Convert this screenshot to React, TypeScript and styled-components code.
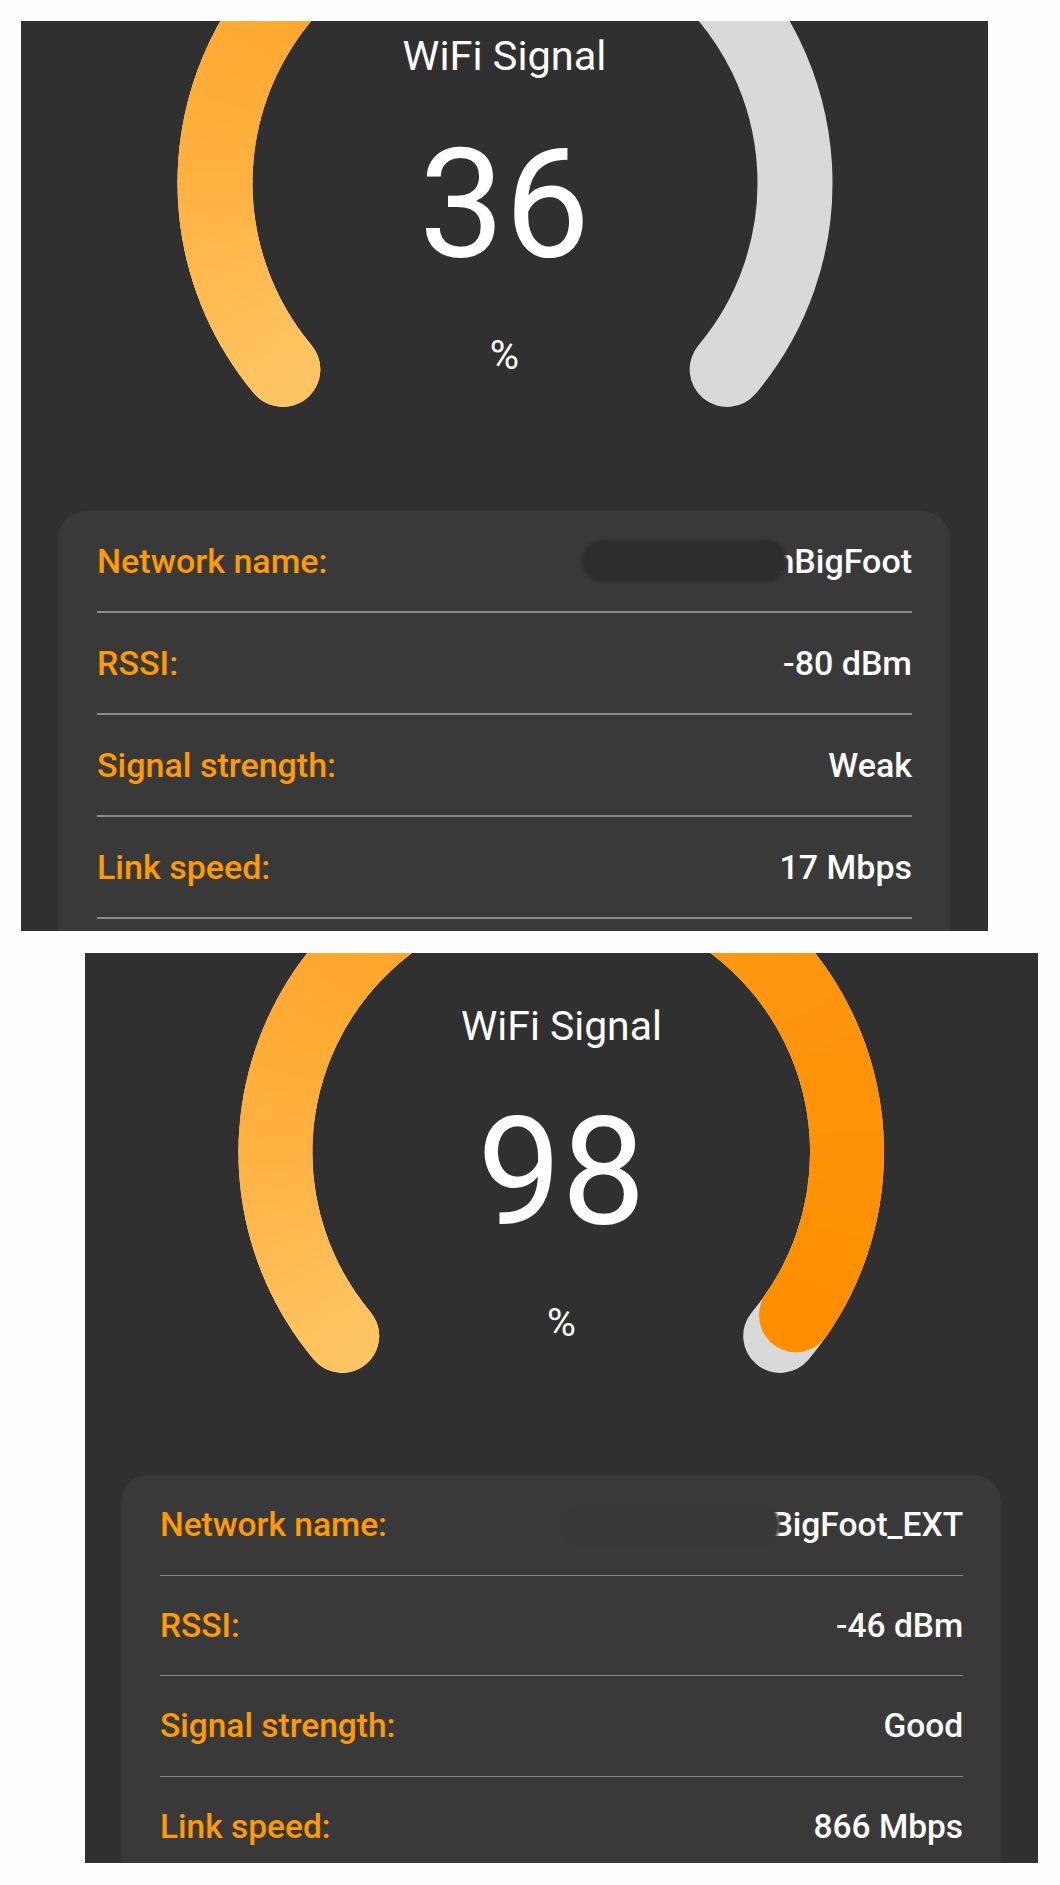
import React from "react";
import styled, { createGlobalStyle } from "styled-components";

const GlobalStyle = createGlobalStyle`
  html, body {
    margin: 0;
    padding: 0;
    background: #fefefe;
  }
  body {
    font-family: Roboto, "Noto Sans", "Liberation Sans", sans-serif;
  }
`;

/* ---------- layout ---------- */

const Page = styled.main`
  display: flex;
  flex-direction: column;
  align-items: flex-start;
  gap: 22px;
  padding: 21px 0 22px;
`;

const Screen = styled.section<{ $scale: number; $shift: number; $left: number }>`
  --s: ${(p) => p.$scale};
  margin-left: ${(p) => p.$left}px;
  width: calc(967px * var(--s));
  height: 910px;
  box-sizing: border-box;
  padding-top: ${(p) => p.$shift}px;
  background: #303030;
  overflow: hidden;
  display: flex;
  flex-direction: column;
`;

const GaugeArea = styled.div`
  flex: none;
  height: calc(490px * var(--s));
  display: grid;
  grid-template-areas: "stack";
  justify-items: center;
  align-items: start;

  & > * {
    grid-area: stack;
  }
`;

const Dial = styled.svg`
  display: block;
  width: calc(660px * var(--s));
  height: calc(560px * var(--s));
  margin-top: calc(-168px * var(--s));
`;

const Readout = styled.div`
  display: flex;
  flex-direction: column;
  align-items: center;
  padding-top: calc(14px * var(--s));
  color: #ffffff;
  font-weight: 400;
`;

const Title = styled.div`
  font-size: calc(41.5px * var(--s));
  line-height: 1;
`;

const Percent = styled.div`
  font-size: calc(152px * var(--s));
  line-height: 1;
  margin-top: calc(52.5px * var(--s));
`;

const Unit = styled.div`
  font-size: calc(40px * var(--s));
  line-height: 1;
  margin-top: calc(55px * var(--s));
`;

const Card = styled.div`
  flex: 1;
  margin: 0 calc(38px * var(--s)) 0 calc(37px * var(--s));
  padding: 0 calc(38px * var(--s)) 0 calc(39px * var(--s));
  background: #393939;
  border-radius: calc(28px * var(--s)) calc(28px * var(--s)) 0 0;
`;

const Row = styled.div`
  height: calc(102px * var(--s));
  box-sizing: border-box;
  border-bottom: calc(2px * var(--s)) solid #8b8b8b;
  display: flex;
  align-items: center;
  justify-content: space-between;
  font-size: calc(34px * var(--s));
  font-weight: 500;
  line-height: 1;
`;

const Label = styled.span`
  color: #ff9a05;
`;

const ValueCell = styled.span`
  display: flex;
  align-items: center;
  color: #ffffff;
`;

const Redaction = styled.span<{ $tone: string; $w: number; $overlap: number }>`
  position: relative;
  z-index: 1;
  width: calc(${(p) => p.$w}px * var(--s));
  height: calc(42px * var(--s));
  border-radius: calc(21px * var(--s));
  background: ${(p) => p.$tone};
  filter: blur(1.5px);
  margin-right: calc(${(p) => -p.$overlap}px * var(--s));
`;

/* ---------- gauge drawing ---------- */

const START = 140;
const SWEEP = 260;
const CX = 330;
const CY = 330;
const R = 290;
const W = 75;

const STOPS: [number, [number, number, number]][] = [
  [0, [255, 196, 98]],
  [0.15, [255, 178, 66]],
  [0.3, [255, 168, 48]],
  [0.6, [255, 153, 20]],
  [1, [255, 142, 0]],
];

function colorAt(t: number): string {
  for (let i = 0; i < STOPS.length - 1; i++) {
    const [t0, c0] = STOPS[i];
    const [t1, c1] = STOPS[i + 1];
    if (t <= t1) {
      const k = (t - t0) / (t1 - t0);
      const c = c0.map((v, j) => Math.round(v + (c1[j] - v) * k));
      return `rgb(${c[0]}, ${c[1]}, ${c[2]})`;
    }
  }
  const c = STOPS[STOPS.length - 1][1];
  return `rgb(${c[0]}, ${c[1]}, ${c[2]})`;
}

function pt(a: number): [number, number] {
  const r = (a * Math.PI) / 180;
  return [CX + R * Math.cos(r), CY + R * Math.sin(r)];
}

function arc(a0: number, a1: number): string {
  const [x0, y0] = pt(a0);
  const [x1, y1] = pt(a1);
  const large = a1 - a0 > 180 ? 1 : 0;
  return `M ${x0.toFixed(2)} ${y0.toFixed(2)} A ${R} ${R} 0 ${large} 1 ${x1.toFixed(2)} ${y1.toFixed(2)}`;
}

function Gauge({ value }: { value: number }) {
  const frac = value / 100;
  const end = START + SWEEP * frac;
  const step = 2;
  const count = Math.max(1, Math.ceil((end - START) / step));
  const segs = Array.from({ length: count }, (_, i) => {
    const a0 = START + i * step;
    const a1 = Math.min(end, a0 + step + 0.6);
    const mid = (a0 + Math.min(end, a0 + step)) / 2;
    return { d: arc(a0, a1), color: colorAt((mid - START) / SWEEP) };
  });
  const [sx, sy] = pt(START);
  const [ex, ey] = pt(end);

  return (
    <Dial viewBox="0 0 660 560">
      <path d={arc(START, START + SWEEP)} stroke="#d9d9d9" strokeWidth={W} fill="none" strokeLinecap="round" />
      <circle cx={sx} cy={sy} r={W / 2} fill={colorAt(0)} />
      {segs.map((s, i) => (
        <path key={i} d={s.d} stroke={s.color} strokeWidth={W} fill="none" strokeLinecap="butt" />
      ))}
      <circle cx={ex} cy={ey} r={W / 2} fill={colorAt(frac)} />
    </Dial>
  );
}

/* ---------- screens ---------- */

type Reading = {
  value: number;
  name: string;
  rssi: string;
  strength: string;
  speed: string;
  scale: number;
  shift: number;
  left: number;
  mask: { tone: string; w: number; overlap: number };
};

const readings: Reading[] = [
  {
    value: 36,
    name: "nBigFoot",
    rssi: "-80 dBm",
    strength: "Weak",
    speed: "17 Mbps",
    scale: 1,
    shift: 0,
    left: 21,
    mask: { tone: "#2d2d2d", w: 205, overlap: 12 },
  },
  {
    value: 98,
    name: "BigFoot_EXT",
    rssi: "-46 dBm",
    strength: "Good",
    speed: "866 Mbps",
    scale: 0.9855,
    shift: 39.5,
    left: 85,
    mask: { tone: "#383838", w: 220, overlap: 8 },
  },
];

function SignalScreen({ r }: { r: Reading }) {
  return (
    <Screen $scale={r.scale} $shift={r.shift} $left={r.left}>
      <GaugeArea>
        <Gauge value={r.value} />
        <Readout>
          <Title>WiFi Signal</Title>
          <Percent>{r.value}</Percent>
          <Unit>%</Unit>
        </Readout>
      </GaugeArea>
      <Card>
        <Row>
          <Label>Network name:</Label>
          <ValueCell>
            <Redaction $tone={r.mask.tone} $w={r.mask.w} $overlap={r.mask.overlap} />
            {r.name}
          </ValueCell>
        </Row>
        <Row>
          <Label>RSSI:</Label>
          <ValueCell>{r.rssi}</ValueCell>
        </Row>
        <Row>
          <Label>Signal strength:</Label>
          <ValueCell>{r.strength}</ValueCell>
        </Row>
        <Row>
          <Label>Link speed:</Label>
          <ValueCell>{r.speed}</ValueCell>
        </Row>
      </Card>
    </Screen>
  );
}

export default function App() {
  return (
    <>
      <GlobalStyle />
      <Page>
        {readings.map((r) => (
          <SignalScreen key={r.value} r={r} />
        ))}
      </Page>
    </>
  );
}
